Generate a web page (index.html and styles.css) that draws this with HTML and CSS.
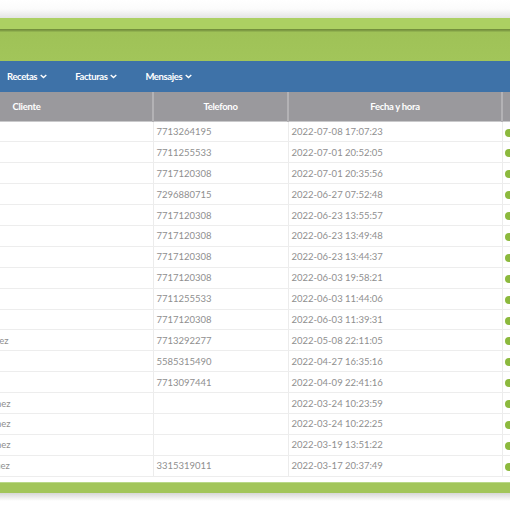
FILE: index.html
```html
<!DOCTYPE html>
<html lang="es">
<head>
<meta charset="utf-8">
<title>Mensajes</title>
<link rel="stylesheet" href="styles.css">
</head>
<body>
<div class="page">
  <div class="top-shade"></div>
  <header class="banner">
    <div class="banner-top"></div>
    <div class="banner-line"></div>
    <div class="banner-main"></div>
  </header>
  <nav class="nav">
    <a class="nav-item">Recetas <svg class="chev" viewBox="0 0 10 6" width="7" height="5"><path d="M1 1l4 3.6L9 1" fill="none" stroke="#fff" stroke-width="2"/></svg></a>
    <a class="nav-item">Facturas <svg class="chev" viewBox="0 0 10 6" width="7" height="5"><path d="M1 1l4 3.6L9 1" fill="none" stroke="#fff" stroke-width="2"/></svg></a>
    <a class="nav-item">Mensajes <svg class="chev" viewBox="0 0 10 6" width="7" height="5"><path d="M1 1l4 3.6L9 1" fill="none" stroke="#fff" stroke-width="2"/></svg></a>
  </nav>
  <div class="table-view">
    <table class="grid">
      <colgroup>
        <col class="c-cliente"><col class="c-tel"><col class="c-fecha"><col class="c-estado">
      </colgroup>
      <thead>
        <tr><th class="h-cliente">Cliente</th><th>Telefono</th><th>Fecha y hora</th><th></th></tr>
      </thead>
      <tbody>
        <tr><td></td><td>7713264195</td><td>2022-07-08 17:07:23</td><td><span class="dot"></span></td></tr>
        <tr><td></td><td>7711255533</td><td>2022-07-01 20:52:05</td><td><span class="dot"></span></td></tr>
        <tr><td></td><td>7717120308</td><td>2022-07-01 20:35:56</td><td><span class="dot"></span></td></tr>
        <tr><td></td><td>7296880715</td><td>2022-06-27 07:52:48</td><td><span class="dot"></span></td></tr>
        <tr><td></td><td>7717120308</td><td>2022-06-23 13:55:57</td><td><span class="dot"></span></td></tr>
        <tr><td></td><td>7717120308</td><td>2022-06-23 13:49:48</td><td><span class="dot"></span></td></tr>
        <tr><td></td><td>7717120308</td><td>2022-06-23 13:44:37</td><td><span class="dot"></span></td></tr>
        <tr><td></td><td>7717120308</td><td>2022-06-03 19:58:21</td><td><span class="dot"></span></td></tr>
        <tr><td></td><td>7711255533</td><td>2022-06-03 11:44:06</td><td><span class="dot"></span></td></tr>
        <tr><td></td><td>7717120308</td><td>2022-06-03 11:39:31</td><td><span class="dot"></span></td></tr>
        <tr><td>Rosa María Pérez Gómez</td><td>7713292277</td><td>2022-05-08 22:11:05</td><td><span class="dot"></span></td></tr>
        <tr><td></td><td>5585315490</td><td>2022-04-27 16:35:16</td><td><span class="dot"></span></td></tr>
        <tr><td></td><td>7713097441</td><td>2022-04-09 22:41:16</td><td><span class="dot"></span></td></tr>
        <tr><td>Luis Alberto Ruiz Jiménez</td><td></td><td>2022-03-24 10:23:59</td><td><span class="dot"></span></td></tr>
        <tr><td>Luis Alberto Ruiz Jiménez</td><td></td><td>2022-03-24 10:22:25</td><td><span class="dot"></span></td></tr>
        <tr><td>Luis Alberto Ruiz Jiménez</td><td></td><td>2022-03-19 13:51:22</td><td><span class="dot"></span></td></tr>
        <tr><td>Carlos Ernesto Rodríguez</td><td>3315319011</td><td>2022-03-17 20:37:49</td><td><span class="dot"></span></td></tr>
      </tbody>
    </table>
  </div>
  <footer class="footer">
    <div class="footer-bar"></div>
    <div class="footer-shade"></div>
  </footer>
</div>
</body>
</html>
```
FILE: styles.css
```css
html, body {
  margin: 0;
  padding: 0;
  background: #ffffff;
  overflow: hidden;
}
.page {
  width: 510px;
  height: 510px;
  overflow: hidden;
  font-family: Lato, "Open Sans", sans-serif;
}
.top-shade {
  height: 18px;
  background: linear-gradient(#ffffff 0%, #fbfbfb 50%, #e4e4e4 100%);
}
.banner-top {
  height: 11px;
  background: #acd062;
}
.banner-line {
  height: 3px;
  background: linear-gradient(#6e8a3a 0%, #7f9c44 50%, #98bb55 100%);
}
.banner-main {
  height: 29px;
  background: linear-gradient(#9fc257 0%, #a2c55a 100%);
}
.nav {
  height: 31px;
  background: #3e72a8;
  display: flex;
  align-items: center;
  padding-left: 7px;
}
.nav-item {
  color: #ffffff;
  font-size: 9.5px;
  font-weight: 700;
  letter-spacing: -0.4px;
  display: flex;
  align-items: center;
  gap: 3px;
  margin-right: 28px;
}
.chev {
  display: block;
}
.table-view {
  overflow: hidden;
  width: 510px;
}
.grid {
  margin-left: -99px;
  border-collapse: collapse;
  table-layout: fixed;
  width: 701px;
}
.c-cliente { width: 252px; }
.c-tel { width: 135px; }
.c-fecha { width: 214px; }
.c-estado { width: 100px; }
.grid th {
  height: 29px;
  padding: 0;
  background: #9a999d;
  color: #ffffff;
  font-size: 9.5px;
  font-weight: 700;
  letter-spacing: -0.3px;
  text-align: center;
  border-left: 2px solid #b3b2b5;
  border-bottom: 1px solid #c9c9cb;
  box-sizing: border-box;
}
.grid th:first-child { border-left: none; }
.grid td {
  height: 20.9px;
  padding: 0 0 0 3px;
  box-sizing: border-box;
  font-size: 9.5px;
  color: #8f8f8f;
  border-bottom: 1px solid #ededed;
  border-left: 1px solid #ececec;
  white-space: nowrap;
  overflow: hidden;
}
.grid td:first-child {
  border-left: none;
  padding-left: 4px;
}
.dot {
  display: inline-block;
  width: 8px;
  height: 8px;
  border-radius: 50%;
  background: #8cb93d;
  vertical-align: middle;
  margin-left: -1px;
}
.footer {
  padding-top: 5px;
}
.footer-bar {
  height: 10px;
  background: #a2c55a;
  border-top: 1px solid #b9d888;
}
.footer-shade {
  height: 8px;
  background: linear-gradient(#d6d6d6, #ffffff);
}
```
